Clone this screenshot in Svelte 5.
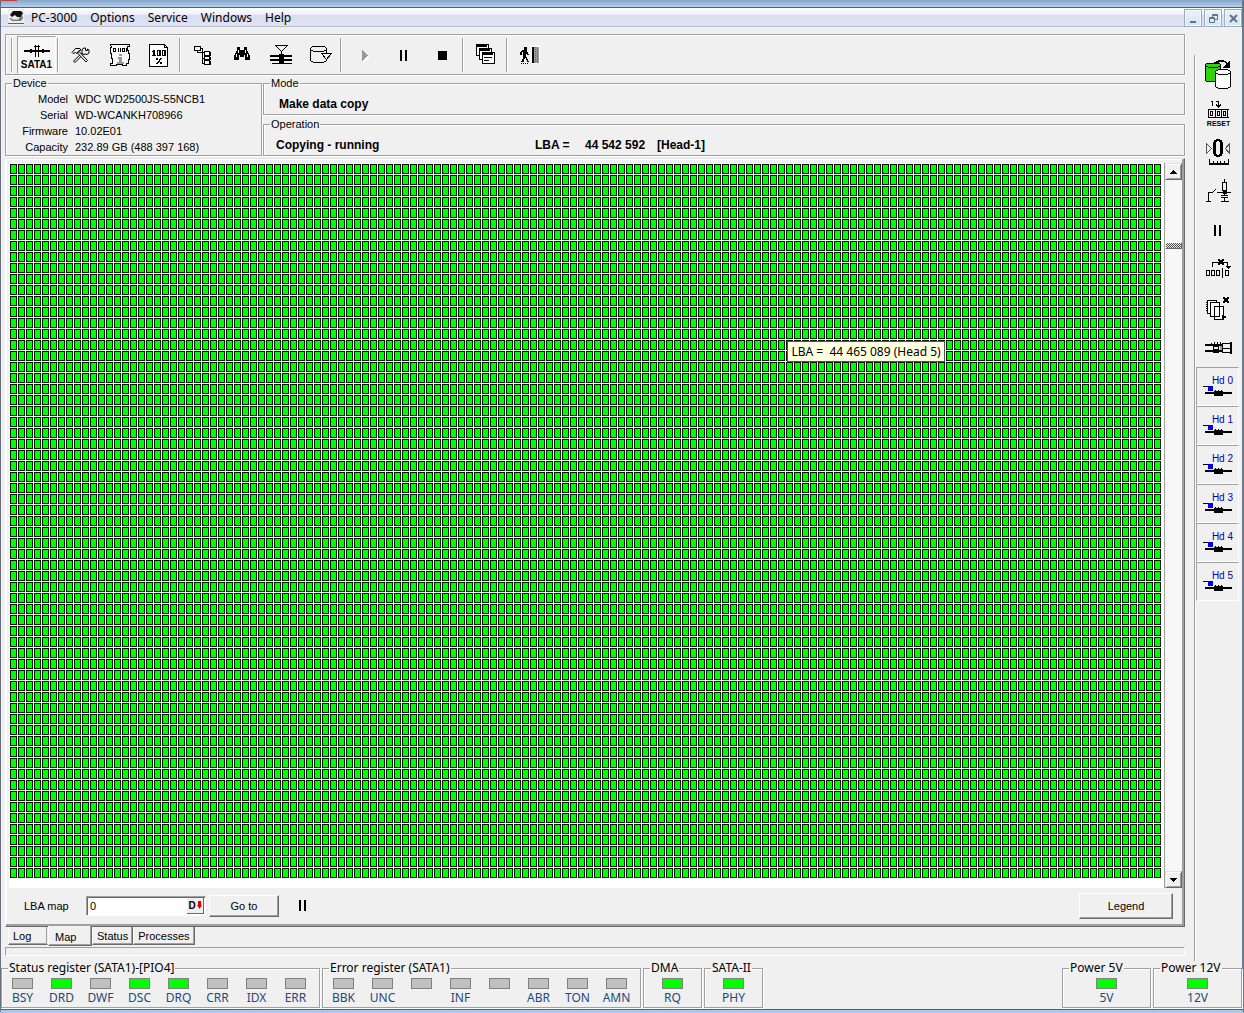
<script lang="ts">
	interface Register {
		title: string;
		bits: { name: string; on?: boolean }[];
	}

	const menu = ['PC-3000', 'Options', 'Service', 'Windows', 'Help'];

	const toolGroups = [
		['tools', 'script', 'percent'],
		['tree', 'find', 'heads', 'disk'],
		['play', 'pause', 'stop'],
		['windows'],
		['exit']
	];

	const device = [
		['Model', 'WDC WD2500JS-55NCB1'],
		['Serial', 'WD-WCANKH708966'],
		['Firmware', '10.02E01'],
		['Capacity', '232.89 GB (488 397 168)']
	];

	const sideTools = ['copy', 'reset', 'recalibrate', 'power', 'pause', 'skip', 'pages', 'headmap'];
	const heads = [0, 1, 2, 3, 4, 5];
	const tabs = ['Log', 'Map', 'Status', 'Processes'];

	const registers: Register[] = [
		{
			title: 'Status register (SATA1)-[PIO4]',
			bits: [
				{ name: 'BSY' },
				{ name: 'DRD', on: true },
				{ name: 'DWF' },
				{ name: 'DSC', on: true },
				{ name: 'DRQ', on: true },
				{ name: 'CRR' },
				{ name: 'IDX' },
				{ name: 'ERR' }
			]
		},
		{
			title: 'Error register (SATA1)',
			bits: [
				{ name: 'BBK' },
				{ name: 'UNC' },
				{ name: '' },
				{ name: 'INF' },
				{ name: '' },
				{ name: 'ABR' },
				{ name: 'TON' },
				{ name: 'AMN' }
			]
		},
		{ title: 'DMA', bits: [{ name: 'RQ', on: true }] },
		{ title: 'SATA-II', bits: [{ name: 'PHY', on: true }] }
	];

	const power: Register[] = [
		{ title: 'Power 5V', bits: [{ name: '5V', on: true }] },
		{ title: 'Power 12V', bits: [{ name: '12V', on: true }] }
	];

	// Map geometry
	const rows = 65;
	const rowHeight = 11;
	const scrollPos = 9;

	let activeTab = $state('Map');
	let lba = $state('0');
</script>

{#snippet toolIcon(name: string)}
	<svg width="24" height="24" viewBox="0 0 24 24" fill="none" stroke="#000" shape-rendering="crispEdges">
		{#if name === 'tools'}
			<g shape-rendering="auto">
				<path d="M13.500 9.500l-9 8.500 1.500 1.500 9-9z" fill="#f0f0f0" />
				<path d="M8.500 10l1.500-1.500 8.500 9-1.500 1.500z" fill="#f0f0f0" />
				<path d="M4 10.500l-1-1 3.500-4h4.500l1 1.500-2.500 1-1.500 2.500-1.500-1z" fill="#f0f0f0" />
				<path d="M13 9.500V6.500l2-1.500h1.500v2.500h2V6l1.500 1v3l-2 1.500-2-.500-1.500.500z" fill="#f0f0f0" />
			</g>
		{:else if name === 'script'}
			<path d="M2.500 1.500h19v2h-2v4h1v3h1v6h-1v4h-2v2h-4v-1h-6v1h-6v-2h2v-5h-1v-5h-1v-6h1z" fill="#f8f8f8" />
			<path d="M5.500 5.500h2v3h-2zM10.500 5v4M12.500 5v4M14.500 5.500h2v3h-2zM18.500 5v4" />
			<path d="M11 11h3v2h-3zM10 14h4v5h2v2H9v-2h2v-3h-1z" fill="#999" stroke="none" />
		{:else if name === 'percent'}
			<path d="M2.500 1.500h15l3 3v19h-18z" fill="#fff" />
			<path d="M17.500 1.500v3h3" />
			<path
				d="M6 7h2v5H6zM5 8h1v1H5zM5 12h4v1H5zM10 7h4v6h-4zM15 7h4v6h-4zM9 15h2v2H9zM13 15h2v1h-1v1h-1v2h-1v1h-1v1H9v-1h1v-1h1v-1h1v-2h1zM13 19h2v2h-2z"
				fill="#000"
				stroke="none"
			/>
			<path d="M11 8h1v4h-1zM16 8h1v4h-1z" fill="#fff" stroke="none" />
		{:else if name === 'tree'}
			<path d="M3.500 3.500h6v4h-6zM6.500 8v1.500h5M11.500 6v14.500h2M11.500 9.500h2M11.500 15.500h2" />
			<path d="M9 5.500h3" />
			<path d="M13.500 8.500h5v4h-5zM13.500 13.500h5v3h-5zM13.500 17.500h5v4h-5z" fill="#fff" />
			<path d="M18.500 9v4M18.500 14v3M18.500 18v4" stroke-width="2" />
		{:else if name === 'find'}
			<path d="M7 4h3v3h4V4h3v3l3 6v4h-5v-5h-1v2h-4v-2H9v5H4v-4l3-6z" fill="#000" stroke="none" />
			<path d="M8.500 7v3M6.500 11v3M15.500 7v3M17.500 11v3" stroke="#fff" />
		{:else if name === 'heads'}
			<path d="M6.500 2.500h12l-6 6zM12.500 9v2" />
			<path d="M1 12h22v2H1zM1 16h22v2H1zM3 19.500h20v1H3zM10 11h5v9h-5z" fill="#000" stroke="none" />
		{:else if name === 'disk'}
			<path d="M2.500 6c0-2 3-3 8-3s8 1 8 3-3 2.500-8 2.500-8-.500-8-2.500zM2.500 6v11c0 1.500 3 2.500 8 2.500s8-1 8-2.500V6" />
			<path d="M13.500 10.500h10l-5 6z" fill="#f8f8f8" />
		{:else if name === 'play'}
			<path d="M11 8l6 6-6 6z" fill="#fff" stroke="none" />
			<path d="M10 7l6 5.500-6 5.500z" fill="#999" stroke="none" />
		{:else if name === 'pause'}
			<path d="M9 7h2v11H9zM14 7h2v11h-2z" fill="#000" stroke="none" />
		{:else if name === 'stop'}
			<path d="M8 8h9v9H8z" fill="#000" stroke="none" />
		{:else if name === 'windows'}
			<path d="M2.500 1.500h12v11h-12z" fill="#fff" />
			<path d="M2 2.500h11" stroke-width="2" />
			<path d="M5.500 5.500h12v11h-12z" fill="#fff" />
			<path d="M5 6.500h11" stroke-width="2" />
			<path d="M8.500 9.500h12v11h-12z" fill="#fff" />
			<path d="M8 10.500h11" stroke-width="2" />
			<path d="M10 14.500h8M10 17.500h5" />
		{:else if name === 'exit'}
			<path d="M13 2h9v19h-9z" fill="#fff" stroke="none" />
			<path d="M14 4h7v16h-7z" fill="#999" stroke="none" />
			<path d="M14 4h2v16h-2z" fill="#000" stroke="none" />
			<path d="M17.500 4v16M19.500 5v16" stroke="#666" stroke-dasharray="1 1" />
			<path
				d="M6 4h3v3H6zM4 7h5v2h1v2h1v1H9v-1H8v3h1v2h1v2h1v1H9v-2H8v-2H7v1H6v3H3v-1h1v-2h1V9H4v3H2V9h1V8h1z"
				fill="#000"
				stroke="none"
			/>
			<path d="M3 20.500h8" stroke-dasharray="1 1" />
		{/if}
	</svg>
{/snippet}

{#snippet sideIcon(name: string)}
	<svg width="32" height="32" viewBox="0 0 32 32" fill="none" stroke="#000" shape-rendering="crispEdges">
		{#if name === 'copy'}
			<path d="M3.500 6c0-1 3-2 7.500-2s7.500 1 7.500 2v15c0 1-3 2-7.500 2s-7.500-1-7.500-2z" fill="#2fd50b" />
			<path d="M3.500 6c0 1.500 3 2.500 7.500 2.500s7.500-1 7.500-2.500" />
			<path d="M13.500 13c0-2 3-2.500 7.500-2.500s7.500 .500 7.500 2.500v14c0 1.500-3 2.500-7.500 2.500s-7.500-1-7.500-2.500z" fill="#fff" />
			<path d="M13.500 13c0 1.500 3 2.500 7.500 2.500s7.500-1 7.500-2.500" />
			<path d="M12 3h2V2h2V1h6v1h2v1h1v1h1v1h-2V4h-1V3h-6v1h-5zM28 1v8h-7z" fill="#000" stroke="none" />
		{:else if name === 'reset'}
			<path d="M9 3.500h1.500V8M14 3.500h2.500V9M14 6.500l2.500 2.500L19 6.500" />
			<path d="M6.500 11.500h20M6.500 19.500h20M6.500 11v9M13.500 11v9M19.500 11v9M25.500 11v9" />
			<path d="M8.500 13.500h2v4h-2zM15.500 13.500h2v4h-2zM21.500 13.500h2v4h-2z" />
			<text x="16.500" y="28" text-anchor="middle" class="reset-text">RESET</text>
		{:else if name === 'recalibrate'}
			<path
				d="M14 2h4v1h2v2h1v12h-1v2h-2v1h-4v-1h-2v-2h-1V5h1V3h2zM15 4v1h-1v12h1v1h2v-1h1V5h-1V4z"
				fill="#000"
				fill-rule="evenodd"
				stroke="none"
			/>
			<path d="M4.500 6.500v10l5-5zM27.500 6.500v10l-4-5z" stroke="#555" />
			<path d="M7 27h20" stroke-width="2" />
			<path d="M7.500 22v5M11.500 24v3M15.500 24v3M18.500 24v3M22.500 24v3M26.500 22v5" />
		{:else if name === 'power'}
			<path d="M22.500 3v3M20.500 6.500h4v8h-4zM22.500 15v5M15 16.500h14M19 19.500h7M19 21.500h7M22.500 22v4M19 25.500h8" />
			<path d="M21 15h4v3h-4z" fill="#000" stroke="none" />
			<path d="M4 25.500h5M6.500 25V16.500h4M11 16l3-3" />
		{:else if name === 'pause'}
			<path d="M12 10h2v11h-2zM17 10h2v11h-2z" fill="#000" stroke="none" />
		{:else if name === 'skip'}
			<path d="M4.500 16.500h3v5h-3zM9.500 16.500h3v5h-3zM14.500 16.500h3v5h-3zM23.500 16.500h3v5h-3zM20.500 14v10" />
			<path d="M10.500 13V8.500h15V13" />
			<path d="M23 12h6l-3 3z" fill="#000" stroke="none" />
			<path d="M16 5h2v1h2V5h2v2h-1v2h1v2h-2v-1h-2v1h-2V9h1V7h-1z" fill="#000" stroke="none" />
		{:else if name === 'pages'}
			<path d="M5.500 7.500h9v13h-9z" fill="#fff" />
			<path d="M4 9.500h2M4 11.500h2M4 13.500h2M4 15.500h2M4 17.500h2" />
			<path d="M8.500 9.500h9v14h-9zM12.500 13.500h9v13h-9z" fill="#fff" />
			<path d="M20 22h2v1h2v2h-2v1h-2z" fill="#000" stroke="none" />
			<path d="M21 4h2v1h2V4h2v2h-1v2h1v2h-2V9h-2v1h-2V8h1V6h-1z" fill="#000" stroke="none" />
		{:else if name === 'headmap'}
			<path
				d="M3 12h18v2H3zM3 18h18v2H3zM11 12h6v9h-6zM9 11h1v2H9zM12 10h1v2h-1zM15 10h1v2h-1zM18 10h1v2h-1z"
				fill="#000"
				stroke="none"
			/>
			<path d="M12 15h4v2h-4z" fill="#f0f0f0" stroke="none" />
			<path d="M18 14h3v4h-3z" fill="#999" stroke="none" />
			<path d="M20.500 11v10M21 11.500h8M21 16.500h8M21 20.500h8" />
			<path d="M28 10h2v12h-2z" fill="#000" stroke="none" />
		{/if}
	</svg>
{/snippet}

{#snippet registerBox(reg: Register)}
	<fieldset class="group register">
		<legend>{reg.title}</legend>
		<div class="bits">
			{#each reg.bits as bit}
				<div class="bit">
					<span class="led" class:on={bit.on}></span>
					<span class="bit-name">{bit.name}</span>
				</div>
			{/each}
		</div>
	</fieldset>
{/snippet}

<div class="window">
	<div class="title-strip"><span class="title-mark"></span></div>

	<header class="menubar">
		<svg width="16" height="16" viewBox="0 0 16 16">
			<rect width="16" height="16" fill="#eee" />
			<path d="M1 9l3 3h9l2-3v-2l-2 1-5 2z" fill="#777" />
			<path d="M2 6l3-4h8l2 2-2 4H9L7 6 4 8z" fill="#111" />
			<path d="M4 10h7" stroke="#fff" />
			<rect y="14" width="16" height="1" fill="#c33" />
		</svg>
		<nav>
			{#each menu as item}
				<button>{item}</button>
			{/each}
		</nav>
		<div class="caption-buttons">
			<button aria-label="Minimize">
				<svg width="9" height="9" viewBox="0 0 9 9"><path d="M1 7h6v2H1z" fill="#627487" /></svg>
			</button>
			<button aria-label="Restore">
				<svg width="9" height="9" viewBox="0 0 9 9" fill="none" stroke="#627487"><path d="M3.500 3V.500h5v5H6M3 1.500h6M.500 3.500h5v5h-5zM0 4.500h6" /></svg>
			</button>
			<button aria-label="Close">
				<svg width="9" height="9" viewBox="0 0 9 9"><path d="M1 1l7 7M8 1L1 8" stroke="#627487" stroke-width="2" /></svg>
			</button>
		</div>
	</header>

	<div class="body">
		<main>
			<div class="toolbar">
				<span class="separator"></span>
				<button class="tool port">
					<svg width="28" height="14" viewBox="0 0 28 14" shape-rendering="crispEdges">
						<path d="M1 6h26v2H1zM7 5h2v4H7zM19 5h2v4h-2z" />
						<path d="M12.500 1v12M15.500 1v12M11 2.500h6M10 7h8" stroke="#000" />
					</svg>
					<span>SATA1</span>
				</button>
				{#each toolGroups as group}
					<span class="separator"></span>
					{#each group as name}
						<button class="tool" aria-label={name}>{@render toolIcon(name)}</button>
					{/each}
				{/each}
			</div>

			<div class="info">
				<fieldset class="group device">
					<legend>Device</legend>
					<dl>
						{#each device as [label, value]}
							<dt>{label}</dt>
							<dd>{value}</dd>
						{/each}
					</dl>
				</fieldset>
				<div class="state">
					<fieldset class="group">
						<legend>Mode</legend>
						<div class="mode">Make data copy</div>
					</fieldset>
					<fieldset class="group">
						<legend>Operation</legend>
						<div class="operation">
							<span class="op-name">Copying - running</span>
							<span class="op-label">LBA =</span>
							<span class="op-lba">44 542 592</span>
							<span>[Head-1]</span>
						</div>
					</fieldset>
				</div>
			</div>

			<section class="panel">
				<div class="map-area">
					<div class="map">
						<div class="cells" style="height: {rows * rowHeight}px"></div>
						<div class="tooltip">LBA =&nbsp; 44 465 089 (Head 5)</div>
					</div>
					<div class="scrollbar">
						<button aria-label="Scroll up"><svg width="7" height="4" viewBox="0 0 7 4" shape-rendering="crispEdges"><path d="M0 4l3.500-4L7 4z" /></svg></button>
						<div class="track"><div class="thumb" style="top: {scrollPos}%"></div></div>
						<button aria-label="Scroll down"><svg width="7" height="4" viewBox="0 0 7 4" shape-rendering="crispEdges"><path d="M0 0l3.500 4L7 0z" /></svg></button>
					</div>
				</div>
				<div class="map-controls">
					<label for="lba">LBA map</label>
					<div class="lba-field">
						<input id="lba" type="text" bind:value={lba} />
						<button aria-label="Decimal">
							<b>D</b>
							<svg width="5" height="8" viewBox="0 0 5 8"><path d="M1 0h3v4h1L2.500 8 0 4h1z" fill="#e00000" /></svg>
						</button>
					</div>
					<button class="push goto">Go to</button>
					<button class="hold" aria-label="Pause">
						<svg width="8" height="11" viewBox="0 0 8 11"><path d="M0 0h2v11H0zM5 0h2v11H5z" /></svg>
					</button>
					<button class="push legend-button">Legend</button>
				</div>
			</section>

			<div class="tabs">
				{#each tabs as tab}
					<button class="tab" class:active={tab === activeTab} onclick={() => (activeTab = tab)}>{tab}</button>
				{/each}
			</div>
			<div class="progress"></div>
		</main>

		<aside>
			{#each sideTools as name}
				<button class="side-tool" aria-label={name}>{@render sideIcon(name)}</button>
			{/each}
			{#each heads as head}
				<button class="side-tool head">
					<span>Hd {head}</span>
					<svg width="30" height="11" viewBox="0 0 30 11" shape-rendering="crispEdges">
						<path d="M0 0h7v1H0zM2 6h27v2H2zM11 5h9v5h-9zM12 4h1v1h-1zM15 4h1v1h-1zM18 4h1v1h-1z" />
						<path d="M5 0h5v5H5z" fill="#0000f0" />
					</svg>
				</button>
			{/each}
		</aside>
	</div>

	<footer>
		{#each registers as reg}
			{@render registerBox(reg)}
		{/each}
		<span class="spacer"></span>
		{#each power as reg}
			{@render registerBox(reg)}
		{/each}
	</footer>
</div>

<style>
	:global(body) {
		margin: 0;
		background: #f0f0f0;
	}

	.window {
		box-sizing: border-box;
		min-height: 100vh;
		display: flex;
		flex-direction: column;
		border-left: 1px solid #68717e;
		border-right: 2px solid #68788c;
		border-bottom: 3px solid #abc8ea;
		background: #f0f0f0;
		color: #000;
		font-family: 'Liberation Sans', Arial, sans-serif;
		font-size: 12px;
	}

	button {
		font: inherit;
		color: inherit;
		margin: 0;
		padding: 0;
		border: 0;
		background: none;
	}

	svg {
		display: block;
	}

	.title-strip {
		height: 7px;
		background: linear-gradient(#86a5c8, #b5d0ef);
		border-bottom: 1px solid #4e617a;
	}

	.title-mark {
		display: block;
		width: 16px;
		height: 1px;
		background: #c33d3d;
	}

	.menubar {
		display: flex;
		align-items: center;
		height: 18px;
		padding-left: 7px;
		border-bottom: 1px solid #b5bccb;
		background: linear-gradient(#fff, #eef0f9 35%, #d9deef 40%, #dfe3f5);
		font-family: 'Noto Sans', sans-serif;
		line-height: 16px;
	}

	nav {
		display: flex;
		gap: 13px;
		margin-left: 7px;
		padding-top: 2px;
		flex: 1;
	}

	.caption-buttons {
		display: flex;
		align-self: flex-start;
		gap: 2px;
		padding-top: 1px;
	}

	.caption-buttons button {
		display: grid;
		place-items: center;
		width: 18px;
		height: 18px;
		box-sizing: border-box;
		border: 1px solid #9aabc0;
		background: linear-gradient(#eaf1fb, #d8e4f3);
		box-shadow: inset 0 0 0 1px #f4f8fd;
	}

	.body {
		flex: 1;
		display: flex;
	}

	main {
		flex: 1;
		display: flex;
		flex-direction: column;
		padding: 7px 9px 5px 4px;
		min-width: 0;
	}

	.toolbar {
		display: flex;
		align-items: center;
		box-sizing: border-box;
		height: 41px;
		padding-left: 4px;
		border: 1px solid #a0a0a0;
		box-shadow: inset 1px 1px #fff, 1px 1px #fff;
	}

	.separator {
		width: 1px;
		height: 34px;
		margin: 0 2px 0 1px;
		border-right: 1px solid #fff;
		background: #a0a0a0;
	}

	.tool {
		display: grid;
		place-items: center;
		width: 39px;
		height: 38px;
	}

	.port {
		align-content: center;
		margin-left: 2px;
		box-sizing: border-box;
		border: 1px solid;
		border-color: #a0a0a0 #fff #fff #a0a0a0;
		background: #f6f6f6;
		font-size: 10px;
		font-weight: bold;
		line-height: 10px;
		gap: 2px;
		padding-top: 4px;
	}

	.info {
		display: flex;
		gap: 1px;
		margin-top: 1px;
	}

	.group {
		min-width: 0;
		margin: 0;
		padding: 0;
		border: 1px solid #a0a0a0;
		box-shadow: inset 1px 1px #fff, 1px 1px #fff;
	}

	.group legend {
		margin-left: 6px;
		padding: 0 1px;
		line-height: 14px;
		font-size: 11px;
	}

	.device {
		width: 255px;
	}

	dl {
		display: grid;
		grid-template-columns: 62px 1fr;
		column-gap: 7px;
		margin: 0;
		padding-top: 1px;
		line-height: 16px;
		font-size: 11px;
	}

	dt {
		text-align: right;
	}

	dd {
		margin: 0;
		white-space: nowrap;
	}

	.state {
		flex: 1;
		display: flex;
		flex-direction: column;
		justify-content: space-between;
	}

	.mode,
	.operation {
		font-size: 12px;
		font-weight: bold;
		line-height: 14px;
		padding: 7px 0 3px 15px;
	}

	.operation {
		display: flex;
		padding-left: 12px;
	}

	.op-name {
		width: 259px;
	}

	.op-label {
		width: 50px;
	}

	.op-lba {
		width: 72px;
	}

	.panel {
		flex: 1;
		display: flex;
		flex-direction: column;
		margin-top: 2px;
		padding: 4px 2px 3px 3px;
		border: 1px solid;
		border-color: #e3e3e3 #696969 #696969 #fff;
		box-shadow: inset -2px -2px #a0a0a0, inset 1px 1px #fff;
	}

	.map-area {
		flex: 1;
		display: flex;
	}

	.map {
		position: relative;
		flex: 1;
		padding: 1px;
		background: #fff;
	}

	/* one 7x10 block with a black frame, repeated on an 8x11 pitch */
	.cells {
		width: round(down, 100%, 8px);
		background-size: 8px 11px;
		background-image:
			linear-gradient(to right, transparent 7px, #fff 7px),
			linear-gradient(to bottom, transparent 10px, #fff 10px),
			linear-gradient(to right, #001400 1px, transparent 1px, transparent 6px, #001400 6px),
			linear-gradient(to bottom, #001400 1px, #00ff00 1px, #00ff00 9px, #001400 9px);
	}

	.tooltip {
		position: absolute;
		left: 67.4%;
		top: 178px;
		padding: 0 3px;
		border: 1px solid #555;
		background: #ffffe1;
		font-family: 'Noto Sans', sans-serif;
		font-size: 12px;
		line-height: 19px;
		white-space: nowrap;
	}

	.scrollbar {
		display: flex;
		flex-direction: column;
		width: 17px;
		border-left: 1px solid #a0a0a0;
	}

	.scrollbar button {
		display: grid;
		place-items: center;
		height: 17px;
		box-sizing: border-box;
		border: 1px solid;
		border-color: #e3e3e3 #696969 #696969 #e3e3e3;
		box-shadow: inset 1px 1px #fff, inset -1px -1px #a0a0a0;
	}

	.track {
		position: relative;
		flex: 1;
		background: repeating-conic-gradient(#fff 0 25%, #f0f0f0 0 50%) 0 0 / 2px 2px;
	}

	.thumb {
		position: absolute;
		left: 0;
		right: 0;
		height: 5px;
		border: 1px solid;
		border-color: #fff #696969 #696969 #fff;
		background: repeating-conic-gradient(#555 0 25%, #e8e8e8 0 50%) 0 0 / 2px 2px;
	}

	.map-controls {
		display: flex;
		align-items: center;
		height: 35px;
		padding: 0 9px 0 15px;
		font-size: 11px;
	}

	.map-controls label {
		width: 62px;
	}

	.lba-field {
		display: flex;
		width: 120px;
		height: 20px;
		box-sizing: border-box;
		border: 1px solid;
		border-color: #a0a0a0 #fff #fff #a0a0a0;
		box-shadow: inset 1px 1px #696969;
		background: #fff;
		padding: 1px;
	}

	.lba-field input {
		flex: 1;
		min-width: 0;
		border: 0;
		padding: 0 2px;
		background: none;
		font: inherit;
		outline: none;
	}

	.lba-field button {
		display: flex;
		align-items: center;
		justify-content: center;
		gap: 1px;
		width: 17px;
		background: #f0f0f0;
		border-right: 1px solid #696969;
		border-bottom: 1px solid #696969;
		font-size: 10px;
	}

	.push {
		box-sizing: border-box;
		height: 22px;
		border: 1px solid;
		border-color: #fff #696969 #696969 #fff;
		box-shadow: inset -1px -1px #a0a0a0;
	}

	.goto {
		width: 70px;
		margin-left: 3px;
	}

	.hold {
		margin-left: 20px;
	}

	.legend-button {
		width: 94px;
		height: 26px;
		margin-left: auto;
	}

	.tabs {
		display: flex;
		align-items: flex-start;
		height: 20px;
		padding-left: 3px;
		font-size: 11px;
	}

	.tab {
		height: 18px;
		padding: 0 4px;
		border: 1px solid;
		border-color: transparent #696969 #696969 #fff;
		border-top: 0;
		box-shadow: inset -1px -1px #a0a0a0;
		line-height: 18px;
	}

	.tab:first-child {
		width: 40px;
		text-align: left;
		border-right-color: transparent;
	}

	.tab.active {
		width: 44px;
		height: 20px;
		margin-top: -1px;
		padding: 0 6px;
		background: #f0f0f0;
		line-height: 22px;
		text-align: left;
	}

	.progress {
		height: 7px;
		border: 1px solid;
		border-color: #a0a0a0 #fff #fff #a0a0a0;
	}

	aside {
		width: 47px;
		margin-top: 28px;
		border-left: 1px solid #a0a0a0;
		box-shadow: inset 1px 0 #fff;
	}

	.side-tool {
		display: grid;
		place-items: center;
		box-sizing: border-box;
		width: 43px;
		height: 39px;
		margin-left: 1px;
	}

	.head {
		align-content: center;
		justify-items: center;
		padding-bottom: 2px;
		border: 1px solid;
		border-color: #a0a0a0 #fff #fff #a0a0a0;
		font-size: 10px;
		line-height: 11px;
		color: #0000b4;
	}

	.head span {
		justify-self: end;
		padding-right: 5px;
	}

	.reset-text {
		font-family: 'Liberation Sans', Arial, sans-serif;
		font-size: 7px;
		font-weight: bold;
		fill: #000;
		stroke: none;
	}

	footer {
		display: flex;
		gap: 2px;
		padding-bottom: 1px;
		border-bottom: 1px solid #4e617a;
		font-family: 'Noto Sans', sans-serif;
		font-size: 12px;
	}

	.register legend {
		margin-left: 6px;
		font-size: 12px;
		line-height: 14px;
	}

	.bits {
		display: flex;
		padding: 3px 4px 2px 1px;
	}

	.bit {
		display: flex;
		flex-direction: column;
		align-items: center;
		width: 39px;
	}

	.register:nth-child(n + 3) .bits {
		padding-left: 9px;
		padding-right: 9px;
	}

	.register:nth-child(n + 6) .bits {
		padding-left: 24px;
		padding-right: 24px;
	}

	.led {
		width: 19px;
		height: 9px;
		border: 1px solid #808080;
		background: #c0c0c0;
	}

	.led.on {
		background: #00ff00;
	}

	.bit-name {
		height: 16px;
		line-height: 18px;
		color: #1f497d;
	}

	.spacer {
		flex: 1;
	}
</style>
